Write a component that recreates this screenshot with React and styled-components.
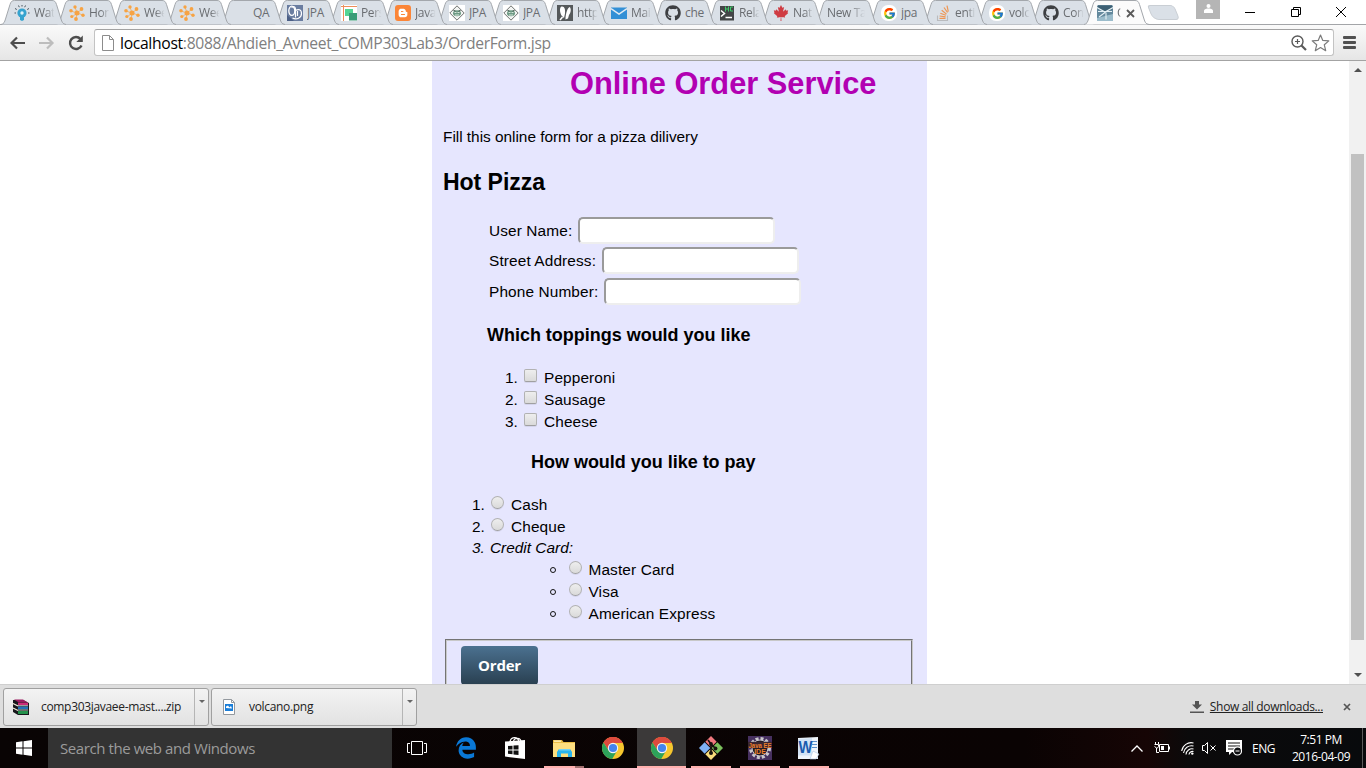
import React from "react";
import styled, { createGlobalStyle, css } from "styled-components";
import { FaGithub, FaCanadianMapleLeaf, FaBloggerB, FaEdgeLegacy } from "react-icons/fa";
import { FcGoogle } from "react-icons/fc";

const ui = `"Open Sans", "Noto Sans", sans-serif`;
const page = `"Liberation Sans", Arial, sans-serif`;

const GlobalStyle = createGlobalStyle`
  * { box-sizing: border-box; }
  html, body { margin: 0; padding: 0; background: #fff; }
  body { width: 1366px; height: 768px; overflow: hidden; }
  svg { display: block; flex: none; }
`;

const Screen = styled.div`
  width: 1366px;
  height: 768px;
  display: flex;
  flex-direction: column;
  overflow: hidden;
  background: #fff;
  color: #000;
`;

/* ---------- tab strip ---------- */
const TabStrip = styled.div`
  display: flex;
  height: 24px;
  flex: none;
  padding-left: 1px;
  position: relative;
  z-index: 1;
`;
const TabBox = styled.div`
  position: relative;
  flex: none;
  width: ${(p) => p.$width}px;
  height: 24px;
  display: flex;
  align-items: center;
  padding: 2px 0 0 13px;
  z-index: ${(p) => p.$z};
  svg { position: relative; flex: none; }
`;
const TabShape = styled.svg`
  && { position: absolute; left: 0; top: 0; overflow: visible; }
`;
const TabLabel = styled.span`
  position: relative;
  width: ${(p) => p.$w || 21}px;
  flex: none;
  margin-left: ${(p) => p.$ml ?? 4}px;
  overflow: hidden;
  white-space: nowrap;
  font: 12px/16px ${ui};
  letter-spacing: -0.35px;
  color: #6a6d71;
  ${(p) => !p.$solid && css`mask-image: linear-gradient(90deg, #000 55%, transparent 98%);`}
`;
const NewTabButton = styled.div`
  width: 27px;
  height: 15px;
  margin: 5px 0 0 12px;
  border: 1px solid #c9ced4;
  border-radius: 3px 4px 4px 6px;
  background: #dae0e7;
  transform: skewX(22deg);
`;
const ProfileChip = styled.div`
  width: 24px;
  height: 19px;
  margin-left: 19px;
  background: #b5b5b5;
  display: flex;
  justify-content: center;
  padding-top: 4px;
`;
const WindowControls = styled.div`
  display: flex;
  align-items: center;
  gap: 35.5px;
  margin-left: 25px;
`;

/* ---------- toolbar ---------- */
const Toolbar = styled.div`
  height: 37px;
  flex: none;
  display: flex;
  align-items: center;
  padding: 0 10px 0 10px;
  border-top: 1px solid #a3a5a8;
  border-bottom: 1px solid #a3a3a3;
  background: linear-gradient(#fafafa, #e6e6e6);
`;
const NavIcons = styled.div`
  display: flex;
  gap: 13px;
  width: 84px;
`;
const Omnibox = styled.div`
  flex: 1;
  height: 27px;
  display: flex;
  align-items: center;
  padding: 0 3px 0 7px;
  border: 1px solid #c3c3c3;
  border-top-color: #a2a2a2;
  border-radius: 3px;
  background: #fff;
`;
const Url = styled.span`
  flex: 1;
  margin-left: 5px;
  white-space: nowrap;
  font: 15.7px/22px ${ui};
  letter-spacing: -0.32px;
  color: #808080;
  b { font-weight: 400; color: #000; }
`;
const OmniActions = styled.div`
  display: flex;
  align-items: center;
  gap: 4px;
`;
const MenuBars = styled.div`
  display: flex;
  flex-direction: column;
  gap: 2px;
  margin-left: 9px;
  i { width: 13px; height: 3px; border-radius: 1px; background: #515151; }
`;

/* ---------- viewport ---------- */
const Viewport = styled.div`
  height: 623px;
  flex: none;
  display: flex;
  overflow: hidden;
`;
const Canvas = styled.div`
  flex: 1;
  padding-left: 432px;
  overflow: hidden;
`;
const Scrollbar = styled.div`
  width: 17px;
  height: 623px;
  background: #f1f1f1;
  display: flex;
  flex-direction: column;
  align-items: center;
  padding-top: 7px;
`;
const Thumb = styled.div`
  width: 13px;
  height: 486px;
  flex: none;
  margin: 82px 0 33px;
  background: #c1c1c1;
`;
const Arrow = styled.i`
  border: 4px solid transparent;
  border-top-width: ${(p) => (p.$up ? 0 : 4)}px;
  border-bottom-width: ${(p) => (p.$up ? 4 : 0)}px;
  border-${(p) => (p.$up ? "bottom" : "top")}-color: #505050;
`;
const Panel = styled.main`
  width: 495px;
  height: 700px;
  padding: 5px 14px 0 11px;
  background: #e6e6fe;
  font: 15.4px/22px ${page};
  letter-spacing: 0.12px;
`;
const Title = styled.h1`
  margin: 0 0 24px 127px;
  font: bold 30.8px/36px ${page};
  letter-spacing: 0;
  color: #b200b2;
`;
const Intro = styled.p`
  margin: 0 0 20px;
  letter-spacing: -0.02px;
`;
const Heading = styled.h2`
  margin: 0 0 21px;
  font: bold 23.1px/28px ${page};
  letter-spacing: -0.08px;
`;
const Question = styled.h3`
  margin: ${(p) => p.$top}px 0 21px ${(p) => p.$left}px;
  font: bold 18px/22px ${page};
  letter-spacing: -0.02px;
`;
const Fields = styled.div`
  display: flex;
  flex-direction: column;
  gap: 4.5px;
  padding-left: 46px;
`;
const Field = styled.label`
  display: flex;
  align-items: center;
  height: 26px;
  gap: 6px;
  span { padding-top: 1px; }
`;
const TextInput = styled.input`
  width: 197px;
  height: 27px;
  padding: 1px;
  border: 2px solid;
  border-color: #9a9a9a #eee #eee #9a9a9a;
  border-radius: 5px;
  background: #fff;
`;
const Options = styled.ul`
  list-style: none;
  margin: 0;
  padding: 0 0 0 ${(p) => p.$left}px;
`;
const Option = styled.li`
  display: flex;
  align-items: flex-start;
  height: ${(p) => p.$h || 22}px;
  font-style: ${(p) => (p.$em ? "italic" : "normal")};
  letter-spacing: ${(p) => (p.$em ? 0 : 0.12)}px;
`;
const Marker = styled.span`
  width: ${(p) => p.$w || 18}px;
  flex: none;
  letter-spacing: 0;
`;
const Bullet = styled.span`
  width: 6px;
  height: 6px;
  margin: 8px 12px 0 0;
  border: 1px solid #111;
  border-radius: 50%;
`;
const Tick = styled.span`
  width: 13px;
  height: 13px;
  flex: none;
  margin: ${(p) => (p.$round ? "2px 7px 0 1px" : "2px 7.5px 0 0")};
  border: 1px solid #b2b2b2;
  border-bottom-color: #a0a0a0;
  border-radius: ${(p) => (p.$round ? "50%" : "2px")};
  background: linear-gradient(#eee, #dadada);
  box-shadow: 0 1px 0 rgba(0, 0, 0, 0.07);
`;
const Submit = styled.div`
  width: 468px;
  height: 100px;
  margin: 14px 0 0 2px;
  padding: 5px 14px;
  border: 2px groove #c8c8c8;
`;
const OrderButton = styled.button`
  width: 77px;
  height: 39px;
  padding: 0;
  border: 0;
  border-radius: 4px;
  background: linear-gradient(#4b7190, #293f50);
  color: #fff;
  font: bold 15px/39px ${ui};
  letter-spacing: -0.2px;
`;

/* ---------- download shelf ---------- */
const Shelf = styled.div`
  height: 44px;
  flex: none;
  display: flex;
  align-items: center;
  gap: 2px;
  padding: 0 15px 0 3px;
  border-top: 1px solid #cfcfcf;
  background: #dedede;
  font: 12px/16px ${ui};
  color: #222;
`;
const Download = styled.div`
  width: 206px;
  height: 38px;
  display: flex;
  align-items: center;
  border: 1px solid #a0a0a0;
  border-radius: 3px;
  background: linear-gradient(#f3f3f3, #e2e2e2);
  svg { margin-left: ${(p) => p.$icon}px; }
  span { margin-left: ${(p) => p.$gap}px; letter-spacing: -0.32px; white-space: nowrap; }
`;
const Drop = styled.div`
  margin-left: auto;
  width: 14px;
  height: 36px;
  display: flex;
  justify-content: center;
  padding-top: 11px;
  border-left: 1px solid #b5b5b5;
  i { height: 0; border: 3px solid transparent; border-top-color: #666; border-bottom: 0; }
`;
const ShowAll = styled.div`
  margin-left: auto;
  display: flex;
  align-items: center;
  gap: 6px;
  u { letter-spacing: -0.33px; }
`;
const CloseShelf = styled.div`
  margin-left: 18px;
`;

/* ---------- taskbar ---------- */
const Taskbar = styled.div`
  height: 40px;
  flex: none;
  display: flex;
  background: linear-gradient(90deg, #090404, #0a0303 75%, #160505 84%, #0b0a0b 87%, #080a0c);
  color: #fff;
  font: 12px/17px ${ui};
`;
const StartButton = styled.div`
  width: 48px;
  display: flex;
  align-items: center;
  justify-content: center;
`;
const Search = styled.div`
  width: 344px;
  padding-left: 12px;
  background: #333;
  color: #9b9b9b;
  font: 15px/41px ${ui};
  letter-spacing: -0.42px;
`;
const TaskButton = styled.div`
  width: 49px;
  height: 40px;
  display: flex;
  flex-direction: column;
  align-items: center;
  justify-content: space-between;
  background: ${(p) => (p.$active ? "#3b3939" : "transparent")};
`;
const AppIcon = styled.div`
  height: 38px;
  display: flex;
  align-items: center;
  padding-top: 2px;
`;
const Running = styled.div`
  width: ${(p) => (p.$wide ? 49 : 40)}px;
  height: 2px;
  background: ${(p) => (p.$split ? "linear-gradient(90deg, #ffb0ae 31px, #a06f6e 31px)" : "#ffb0ae")};
`;
const Tray = styled.div`
  margin-left: auto;
  display: flex;
  align-items: center;
  padding-right: 3px;
`;
const TrayIcon = styled.div`
  margin-right: ${(p) => p.$r}px;
`;
const Language = styled.span`
  width: 24px;
  letter-spacing: -0.5px;
`;
const Clock = styled.div`
  width: 60px;
  margin: 0 11px 0 15px;
  text-align: center;
  letter-spacing: -0.45px;
  white-space: nowrap;
`;
const Peek = styled.div`
  width: 1px;
  height: 40px;
  background: #5a5a5a;
`;

/* ---------- drawings ---------- */
const Bulb = () => (
  <svg width="16" height="16" viewBox="0 0 16 16">
    <circle cx="8" cy="8" r="4.6" fill="#35a3cf" />
    <circle cx="8" cy="8" r="1.7" fill="#dff2fa" />
    <path d="M6 12h4v2.500l-1 1.200H7l-1-1.200z" fill="#35a3cf" />
    <path d="M1 3.500l1.800 1M15 3.500l-1.800 1M0.500 8h1.500M14 8h1.500M4.500 .5l.8 1.700M11.500 .5l-.8 1.700M8 0v1.500" stroke="#46535c" strokeWidth="1" />
  </svg>
);
const Nodes = () => (
  <svg width="16" height="16" viewBox="0 0 16 16" fill="#f7a343">
    <path d="M8 8L6 2M8 8l5-4M8 8l6 2M8 8l-1 6M8 8L2 6M8 8l-5 4" stroke="#f7a343" strokeWidth=".7" />
    <circle cx="8" cy="8" r="2.500" /><circle cx="6" cy="2" r="1.700" /><circle cx="12.500" cy="4" r="1.900" />
    <circle cx="14" cy="10.300" r="1.700" /><circle cx="7" cy="14" r="1.900" /><circle cx="2" cy="5.800" r="1.800" /><circle cx="2.800" cy="11.500" r="1.600" />
  </svg>
);
const Oracle = () => (
  <svg width="16" height="16" viewBox="0 0 16 16">
    <rect width="16" height="16" fill="#6a7da0" />
    <path d="M0 10L7 16H0z" fill="#4b5f86" />
    <ellipse cx="4.800" cy="5.800" rx="3" ry="4.600" fill="none" stroke="#fff" strokeWidth="1.300" />
    <path d="M4.500 2.500c3-2 4 0 4 2v8M5.500 13c4 2 9 0 9-4.500S11 4 8.500 5.500M10.500 6v5" fill="none" stroke="#fff" strokeWidth="1.200" />
  </svg>
);
const Squares = () => (
  <svg width="16" height="16" viewBox="0 0 16 16">
    <rect width="16" height="16" fill="#fff" />
    <path d="M0 1.500h16M2.500 0v16" stroke="#ee8e5b" />
    <rect x="4" y="4" width="8" height="7" fill="#55d594" /><rect x="8" y="8" width="8" height="7.500" fill="#3a9c77" />
  </svg>
);
const IconTile = styled.div`
  position: relative;
  width: 16px;
  height: 16px;
  flex: none;
  display: flex;
  align-items: center;
  justify-content: center;
  border-radius: ${(p) => p.$r}px;
  background: ${(p) => p.$bg};
  color: #fff;
`;
const Diamond = () => (
  <svg width="16" height="16" viewBox="0 0 16 16">
    <rect width="16" height="16" fill="#fff" />
    <path d="M8 .8L15.200 8 8 15.200.8 8z" fill="#f2f4f2" stroke="#5d615f" strokeWidth=".9" />
    <ellipse cx="8" cy="8.300" rx="4" ry="3" fill="#6d9a84" />
    <path d="M5.500 7.500h2M8.500 7.500h2M6 10h4" stroke="#d6e4da" /><path d="M4.500 5.500l2 .5M11.500 5.500l-2 .5" stroke="#3a4d44" />
  </svg>
);
const Feather = () => (
  <svg width="16" height="16" viewBox="0 0 16 16">
    <rect width="16" height="16" fill="#55595b" />
    <path d="M4.500 1.500C7.500 1 8.500 4 8 8.500L7 13 4.500 10.500C2.500 7 2.500 2.500 4.500 1.500zM12.500 2c2 1 1.500 6-.5 8l-1 3.500-2.500 1C8.500 11 9.500 4 12.500 2z" fill="#fff" />
    <path d="M3 15l2.500-3" stroke="#fff" strokeWidth="1.500" />
  </svg>
);
const Mail = () => (
  <svg width="16" height="16" viewBox="0 0 16 16">
    <rect y="2.500" width="16" height="11.500" fill="#3390d6" />
    <path d="M0 3.500l8 5.500 8-5.500" fill="none" stroke="#e2ebf3" strokeWidth="1.500" />
  </svg>
);
const Terminal = () => (
  <svg width="16" height="16" viewBox="0 0 16 16" fill="none">
    <rect x="1" y="1" width="14" height="14.500" fill="#434547" />
    <path d="M2 5.500L5.500 8.500l-3.500 3M6.500 12.500H13" stroke="#fff" strokeWidth="1.500" />
    <path d="M6.500 1.500v5M9.500 1.500v5M6.500 4h3M14 2h-2.500v4h2.500" stroke="#3ecb6b" />
  </svg>
);
const Stack = () => (
  <svg width="16" height="16" viewBox="0 0 16 16" fill="none">
    <path d="M2.500 10.500v5h10v-5" stroke="#b9bbbe" strokeWidth="1.100" />
    <path d="M4.500 13.300h6M4.600 11l6 .8M5.300 8.300l5.600 2M6.700 5.300l4.800 3.800M9 2.500l3.500 5M12 .6l1.300 6" stroke="#ee9653" strokeWidth="1.200" />
  </svg>
);
const Bridge = () => (
  <svg width="16" height="16" viewBox="0 0 16 16">
    <rect width="16" height="16" rx="1.500" fill="#64899d" />
    <path d="M1 .5h14l.5 4-7.500 2L.5 4z" fill="#3d6074" /><path d="M0 13l16-4v7H0z" fill="#9bbccb" />
    <path d="M0 2.500l8 4.500 8-4.500M1 6.500h14M9 7.500v7M8 7.500l-6 4.500" stroke="#e4f0f5" strokeWidth="1.100" fill="none" />
  </svg>
);
const Google = () => <IconTile $bg="#fff" $r={7}><FcGoogle size={13} /></IconTile>;
const Blogger = () => <IconTile $bg="#fb8537" $r={3}><FaBloggerB size={10} /></IconTile>;
const Hub = () => <FaGithub size={16} color="#3d3f42" />;
const Maple = () => <FaCanadianMapleLeaf size={16} color="#cf3c43" />;

const Chrome = () => (
  <svg width="22" height="22" viewBox="0 0 22 22">
    <circle cx="11" cy="11" r="11" fill="#f6c62e" />
    <path d="M1.470 5.500A11 11 0 0 1 20.530 5.500L11 6z" fill="#dd4b3e" />
    <path d="M11 6h9.800a11 11 0 0 0-.3-.5A11 11 0 0 0 1.470 5.500L6.700 13.500 8 7z" fill="#dd4b3e" />
    <path d="M1.470 5.500A11 11 0 0 0 10.200 22l5-8.500-4.200 2.500-4.300-2.500z" fill="#2da35a" />
    <circle cx="11" cy="11" r="5.200" fill="#f4f4f4" /><circle cx="11" cy="11" r="4.100" fill="#4384ee" />
  </svg>
);
const Store = () => (
  <svg width="22" height="24" viewBox="0 0 22 24">
    <path d="M6 7c0-7 8-7 9-1M9 7c1-7 8-5 8-1" fill="none" stroke="#fff" strokeWidth="1.200" />
    <path d="M1 5.500L21 4v19L1 20.500z" fill="#fff" />
    <path d="M4 10l4.500-.3v3.800H4zM9.500 9.600l5-.4v4.300h-5zM4 14.500h4.500v3.800L4 17.800zM9.500 14.500h5v4.500l-5-.6z" fill="#111" />
  </svg>
);
const Explorer = () => (
  <svg width="22" height="19" viewBox="0 0 22 19">
    <path d="M0 1h9l1.500 2H22v15H0z" fill="#e9bc45" /><path d="M0 4h22v14H0z" fill="#fddf80" />
    <path d="M1 1.500h7v1.300H1z" fill="#fff3c2" />
    <path d="M4 18v-5l2-3h11l2 3v5h-4v-3.500H8V18z" fill="#29b5ee" /><path d="M6 10h11v1.500H6z" fill="#75d3f5" />
  </svg>
);
const Git = () => (
  <svg width="26" height="26" viewBox="0 0 26 26">
    <g transform="rotate(45 13 13)">
      <rect x="4.500" y="4.500" width="8" height="8" fill="#f0787e" /><rect x="13.500" y="4.500" width="8" height="8" fill="#7bc05c" />
      <rect x="4.500" y="13.500" width="8" height="8" fill="#7fb2f5" /><rect x="13.500" y="13.500" width="8" height="8" fill="#f9dc7c" />
    </g>
    <path d="M10 5l3 4v9M13 9l5 5" stroke="#17110e" strokeWidth="1.700" fill="none" />
    <circle cx="13" cy="9" r="1.900" fill="#17110e" /><circle cx="17.500" cy="13.500" r="1.900" fill="#17110e" /><circle cx="13" cy="18" r="2" fill="#17110e" />
  </svg>
);
const JavaEE = () => (
  <svg width="24" height="24" viewBox="0 0 24 24">
    <rect width="24" height="24" fill="#46305f" />
    <circle cx="12" cy="12" r="9.500" fill="none" stroke="#c9c7cb" strokeWidth="3" strokeDasharray="3 2" />
    <circle cx="12" cy="12" r="8" fill="#211a24" stroke="#c9c7cb" strokeWidth="1" />
    <rect y="5.800" width="24" height="6.200" fill="#3a2530" />
    <text x="12" y="11.600" textAnchor="middle" textLength="23" lengthAdjust="spacingAndGlyphs" fontFamily="Liberation Sans" fontWeight="700" fontSize="7" fill="#ec7f2c">Java EE</text>
    <text x="12" y="17.800" textAnchor="middle" fontFamily="Liberation Sans" fontWeight="700" fontSize="7" fill="#ec7f2c">IDE</text>
  </svg>
);
const Word = () => (
  <svg width="23" height="23" viewBox="0 0 23 23">
    <path d="M1 1l20-1v22H1z" fill="#f0f5fb" /><path d="M15 4.500h5M15 7.500h5M15 10.500h5" stroke="#5c8fc9" />
    <path d="M1 2l14-1v17.500H1z" fill="#d3e3f5" />
    <text x="8.500" y="15.500" textAnchor="middle" textLength="14" lengthAdjust="spacingAndGlyphs" fontFamily="Liberation Sans" fontWeight="700" fontSize="16" fill="#1b5cae">W</text>
    <path d="M16 14l6 3-3 5h-6z" fill="#fff" stroke="#a9c4e2" strokeWidth=".6" />
  </svg>
);
const TaskView = () => (
  <svg width="20" height="14" viewBox="0 0 20 14" fill="none" stroke="#fff" strokeWidth="1">
    <path d="M4.500.5h11v13h-11zM3 2.500H.5v9H3M17 2.500h2.500v9H17" />
  </svg>
);
const Books = () => (
  <svg width="18" height="18" viewBox="0 0 18 18">
    <path d="M1 2h10l6 3v12H6L1 14z" fill="#19191d" />
    <path d="M2 1.500h9l4 2.500H6z" fill="#9a1c61" /><path d="M6 4.500h10V7H6z" fill="#cc2b79" />
    <path d="M6 8.500h10v2.700H6z" fill="#2272b8" /><path d="M6 13h10v3H6z" fill="#25924c" />
    <path d="M1 5.500l5 2.500M1 10l5 2.500" stroke="#f4f0dd" strokeWidth="1.200" /><path d="M6 7.700h10M6 12h10" stroke="#e8e6da" strokeWidth=".8" />
  </svg>
);
const ImageFile = () => (
  <svg width="12" height="16" viewBox="0 0 12 16">
    <path d="M.5.500h8l3 3v12H.5z" fill="#fff" stroke="#93989e" /><path d="M8.500.500v3h3" fill="none" stroke="#93989e" />
    <rect x="2" y="5" width="8" height="7" fill="#1b7ed8" /><path d="M3 9V7.500l2-1 1.500 2L8 7l1 2.500" fill="#fff" />
  </svg>
);

const tabs = [
  ["Wat", Bulb], ["Hom", Nodes], ["Wee", Nodes], ["Wee", Nodes], ["QA", null], ["JPA", Oracle], ["Pers", Squares],
  ["Java", Blogger], ["JPA", Diamond], ["JPA", Diamond], ["http", Feather], ["Mail", Mail], ["che", Hub], ["Rela", Terminal],
  ["Nati", Maple], ["New Tab", null], ["jpa", Google], ["entit", Stack], ["volca", Google], ["Com", Hub],
];

const Tab = ({ label, Icon, z, active, width = 54 }) => (
  <TabBox $z={z} $width={width}>
    <TabShape width="66" height="25" viewBox="0 0 66 25">
      <path
        d="M0 24.500C3 24 3.500 22 4.500 19L9 4.500C10 1.500 11 .5 13.500 .5H51C53.500 .5 54.500 1.500 55.500 4.500L60 19C61 22 61.500 24 65 24.500"
        fill={active ? "#fbfbfb" : "#dae0e7"}
        stroke="#a3a7ac"
      />
    </TabShape>
    {Icon && <Icon />}
    {active ? (
      <>
        <TabLabel $w={4} $ml={4}>O</TabLabel>
        <svg width="9" height="9" viewBox="0 0 9 9" style={{ marginLeft: 5 }}>
          <path d="M1 1l7 7M8 1L1 8" stroke="#5a5a5a" strokeWidth="1.800" />
        </svg>
      </>
    ) : (
      <TabLabel
        $w={label === "New Tab" ? 39 : undefined}
        $ml={label === "New Tab" ? 0 : label === "QA" ? 20 : 4}
        $solid={label === "QA" || label === "JPA" || label === "jpa" || label === "che"}
      >
        {label}
      </TabLabel>
    )}
  </TabBox>
);

const fields = ["User Name:", "Street Address:", "Phone Number:"];
const toppings = ["Pepperoni", "Sausage", "Cheese"];
const cards = ["Master Card", "Visa", "American Express"];

export default function App() {
  return (
    <Screen>
      <GlobalStyle />
      <TabStrip>
        {tabs.map(([label, Icon], i) => <Tab key={i} label={label} Icon={Icon} z={30 - i} width={i < 3 ? 55 : 54} />)}
        <Tab label="" Icon={Bridge} z={40} active />
        <NewTabButton />
        <ProfileChip>
          <svg width="9" height="9" viewBox="0 0 9 9" fill="#fff"><circle cx="4.500" cy="2" r="2" /><path d="M0 9V7c0-2 3-2.500 4.500-2.500S9 5 9 7v2z" /></svg>
        </ProfileChip>
        <WindowControls>
          <svg width="10" height="11" viewBox="0 0 10 11"><path d="M0 5.500h10" stroke="#000" /></svg>
          <svg width="10" height="10" viewBox="0 0 10 10" fill="none" stroke="#000"><path d="M.5 2.500h7v7h-7zM2.500 2.500v-2h7v7h-2" /></svg>
          <svg width="10" height="10" viewBox="0 0 10 10" stroke="#000"><path d="M0 0l10 10M10 0L0 10" /></svg>
        </WindowControls>
      </TabStrip>
      <Toolbar>
        <NavIcons>
          <svg width="16" height="16" viewBox="0 0 16 16" fill="none" stroke="#4d4d4d" strokeWidth="2.200"><path d="M15 8H2M7 2.500L1.500 8 7 13.500" /></svg>
          <svg width="16" height="16" viewBox="0 0 16 16" fill="none" stroke="#bdbdbd" strokeWidth="2.200"><path d="M0 8h13M8 2.500l5.500 5.500L8 13.500" /></svg>
          <svg width="16" height="16" viewBox="0 0 16 16" fill="none" stroke="#4d4d4d" strokeWidth="2.400"><path d="M12.500 4A6 6 0 1 0 13.500 10.500" /><path d="M14.800.500v6.500H8.300z" fill="#4d4d4d" stroke="none" /></svg>
        </NavIcons>
        <Omnibox>
          <svg width="13" height="16" viewBox="0 0 13 16" fill="#fff" stroke="#8c8c8c"><path d="M.5.500h7l4 4v11H.5zM7.500 .5v4h4" /></svg>
          <Url><b>localhost</b>:8088/Ahdieh_Avneet_COMP303Lab3/OrderForm.jsp</Url>
          <OmniActions>
            <svg width="16" height="16" viewBox="0 0 16 16" fill="none" stroke="#5a5a5a"><circle cx="6.500" cy="6.500" r="5.500" strokeWidth="1.400" /><path d="M6.500 4v5M4 6.500h5" strokeWidth="1.200" /><path d="M10.500 10.500l4.500 4.500" strokeWidth="2.200" /></svg>
            <svg width="19" height="18" viewBox="0 0 19 18" fill="#fff" stroke="#7b7b7b" strokeLinejoin="round" strokeWidth="1.200"><path d="M9.500 1l2.300 5.400 6 .500-4.500 3.900 1.400 5.900-5.200-3.100-5.200 3.100 1.400-5.900L1.200 6.900l6-.500z" /></svg>
          </OmniActions>
        </Omnibox>
        <MenuBars><i /><i /><i /></MenuBars>
      </Toolbar>

      <Viewport>
        <Canvas>
          <Panel>
            <Title>Online Order Service</Title>
            <Intro>Fill this online form for a pizza dilivery</Intro>
            <Heading>Hot Pizza</Heading>
            <Fields>
              {fields.map((name) => <Field key={name}><span>{name}</span><TextInput /></Field>)}
            </Fields>
            <Question $top={20} $left={44}>Which toppings would you like</Question>
            <Options $left={62}>
              {toppings.map((t, i) => <Option key={t}><Marker $w={18.500}>{i + 1}.</Marker><Tick />{t}</Option>)}
            </Options>
            <Question $top={18} $left={88}>How would you like to pay</Question>
            <Options $left={29}>
              <Option><Marker>1.</Marker><Tick $round />Cash</Option>
              <Option $h={21}><Marker>2.</Marker><Tick $round />Cheque</Option>
              <Option $em><Marker>3.</Marker>Credit Card:</Option>
            </Options>
            <Options $left={106.5}>
              {cards.map((c) => <Option key={c}><Bullet /><Tick $round />{c}</Option>)}
            </Options>
            <Submit><OrderButton>Order</OrderButton></Submit>
          </Panel>
        </Canvas>
        <Scrollbar><Arrow $up /><Thumb /><Arrow /></Scrollbar>
      </Viewport>

      <Shelf>
        <Download $icon={8} $gap={11}><Books /><span>comp303javaee-mast....zip</span><Drop><i /></Drop></Download>
        <Download $icon={11} $gap={14}><ImageFile /><span>volcano.png</span><Drop><i /></Drop></Download>
        <ShowAll>
          <svg width="14" height="14" viewBox="0 0 14 14" fill="#555"><path d="M5 1h4v3.500h3L7 9.500 2 4.500h3zM0 11.500h14v1.500H0z" /></svg>
          <u>Show all downloads...</u>
        </ShowAll>
        <CloseShelf>
          <svg width="8" height="8" viewBox="0 0 8 8"><path d="M1 1l6 6M7 1L1 7" stroke="#555" strokeWidth="1.700" /></svg>
        </CloseShelf>
      </Shelf>

      <Taskbar>
        <StartButton>
          <svg width="16" height="16" viewBox="0 0 16 16" fill="#fff"><path d="M0 2.200l6.500-.900v6.200H0zM7.500 1.200L16 0v7.500H7.500zM0 8.500h6.500v6.200L0 13.800zM7.500 8.500H16V16l-8.500-1.200z" /></svg>
        </StartButton>
        <Search>Search the web and Windows</Search>
        <TaskButton><AppIcon><TaskView /></AppIcon></TaskButton>
        <TaskButton><AppIcon><FaEdgeLegacy size={22} color="#0a78d6" /></AppIcon></TaskButton>
        <TaskButton><AppIcon><Store /></AppIcon></TaskButton>
        <TaskButton><AppIcon><Explorer /></AppIcon><Running $split /></TaskButton>
        <TaskButton><AppIcon><Chrome /></AppIcon></TaskButton>
        <TaskButton $active><AppIcon><Chrome /></AppIcon><Running $wide /></TaskButton>
        <TaskButton><AppIcon><Git /></AppIcon><Running /></TaskButton>
        <TaskButton><AppIcon><JavaEE /></AppIcon><Running /></TaskButton>
        <TaskButton><AppIcon><Word /></AppIcon><Running /></TaskButton>
        <Tray>
          <TrayIcon $r={11}><svg width="12" height="7" viewBox="0 0 12 7" fill="none" stroke="#fff" strokeWidth="1.300"><path d="M.5 6.500L6 1l5.500 5.500" /></svg></TrayIcon>
          <TrayIcon $r={11}><svg width="16" height="12" viewBox="0 0 16 12" fill="none" stroke="#fff"><path d="M5.500 2.500h9v7h-9zM15.500 4.500v3M1.500 0v2M4.500 0v2M.5 2.500h4v2l-1 1.500h-1L.5 4.500M2.500 6v4.500H5" /><path d="M7 4h3v4H7z" fill="#fff" stroke="none" /></svg></TrayIcon>
          <TrayIcon $r={8}><svg width="13" height="13" viewBox="0 0 13 13" fill="none" stroke="#fff" strokeWidth="1.100"><path d="M.7 9A9.500 9.500 0 0 1 12.500 1M2.500 11A8 8 0 0 1 12.500 4M5 12.500A6 6 0 0 1 12.500 7M8 12.500a3.500 3.500 0 0 1 4.500-3" /><circle cx="11.300" cy="11.600" r="1.200" fill="#fff" stroke="none" /></svg></TrayIcon>
          <TrayIcon $r={10}><svg width="14" height="12" viewBox="0 0 14 12" fill="none" stroke="#fff"><path d="M.5 3.500h2l3-3v11l-3-3h-2zM8.500 3.500l5 5M13.500 3.500l-5 5" /></svg></TrayIcon>
          <TrayIcon $r={10}><svg width="16" height="16" viewBox="0 0 16 16"><path d="M0 0h16v12H6l-3 3v-3H0z" fill="#fff" /><path d="M2 3h12M2 6h12M2 9h6" stroke="#111" /><circle cx="11.500" cy="11" r="4" fill="#0c0d0f" stroke="#fff" strokeWidth="1.200" /><path d="M9.500 11h4" stroke="#fff" /></svg></TrayIcon>
          <Language>ENG</Language>
          <Clock>7:51 PM<br />2016-04-09</Clock>
          <Peek />
        </Tray>
      </Taskbar>
    </Screen>
  );
}
